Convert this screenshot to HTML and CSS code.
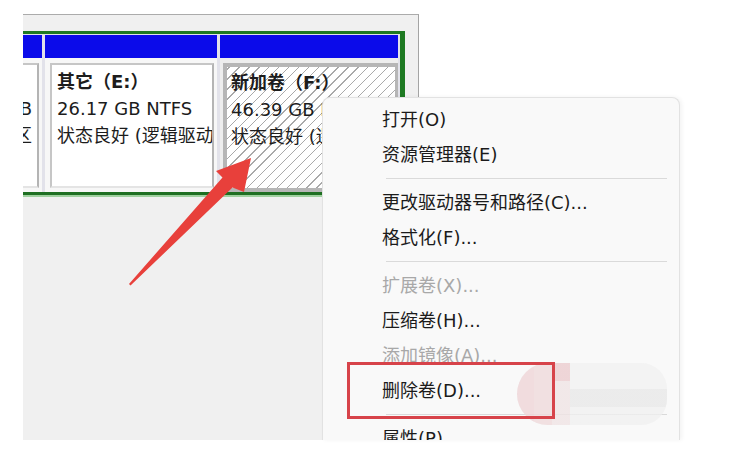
FILE: index.html
```html
<!DOCTYPE html>
<html lang="zh-CN">
<head>
<meta charset="utf-8">
<title>磁盘管理</title>
<link rel="stylesheet" href="styles.css">
</head>
<body>
<div class="page">
  <div class="panel">
    <div class="disk">
      <div class="part part-first">
        <div class="hdr"></div>
        <div class="body">
          <div class="box box-plain box-right">
            <div class="ln ttl">&nbsp;</div>
            <div class="ln">97.66 GB</div>
            <div class="ln">状态良好 (主分区</div>
          </div>
        </div>
      </div>
      <div class="part part-mid">
        <div class="hdr"></div>
        <div class="body">
          <div class="box box-plain">
            <div class="ln ttl">其它（E:）</div>
            <div class="ln">26.17 GB NTFS</div>
            <div class="ln">状态良好 (逻辑驱动器)</div>
          </div>
        </div>
      </div>
      <div class="part part-sel">
        <div class="hdr"></div>
        <div class="body body-sel">
          <div class="box box-hatch">
            <div class="ln ttl">新加卷（F:）</div>
            <div class="ln">46.39 GB NTFS</div>
            <div class="ln">状态良好 (逻辑驱动器)</div>
          </div>
        </div>
      </div>
    </div>
  </div>

  <div class="menu">
    <div class="item">打开(O)</div>
    <div class="item">资源管理器(E)</div>
    <div class="sep"></div>
    <div class="item">更改驱动器号和路径(C)...</div>
    <div class="item">格式化(F)...</div>
    <div class="sep"></div>
    <div class="item off">扩展卷(X)...</div>
    <div class="item">压缩卷(H)...</div>
    <div class="item off">添加镜像(A)...</div>
    <div class="item">删除卷(D)...</div>
    <div class="sep"></div>
    <div class="item">属性(P)</div>
  </div>

  <div class="mark">
    <div class="mk mk-a"></div>
    <div class="mk mk-b"></div>
    <div class="mk mk-c"></div>
    <div class="mk mk-d"></div>
  </div>
  <div class="callout"></div>

  <svg class="arrow" width="744" height="463" viewBox="0 0 744 463">
    <polygon points="251,158 244,192 232.5,187.5 130.5,285.5 129,284 222.5,177.5 216,171" fill="#e8403b"/>
  </svg>
</div>
</body>
</html>
```

FILE: styles.css
```css
html, body {
  margin: 0;
  padding: 0;
  background: #ffffff;
}

.page {
  position: relative;
  width: 744px;
  height: 463px;
  overflow: hidden;
  background: #ffffff;
  font-family: "DejaVu Sans", "Noto Sans CJK SC", sans-serif;
  font-size: 18px;
  color: #1c1c1c;
}

.panel {
  margin: 14px 0 0 23px;
  width: 396px;
  height: 426px;
  box-sizing: border-box;
  background: #f0f0f0;
  border-top: 1px solid #ababab;
  border-right: 1px solid #a4a4a4;
  padding-top: 16px;
}

.disk {
  display: flex;
  gap: 3px;
  width: 382px;
  height: 164px;
  box-sizing: border-box;
  overflow: hidden;
  padding: 1px 2px 0 0;
  background: #e2e2ea;
  border-top: 3px solid #1e7a22;
  border-right: 5px solid #1e7a22;
  border-bottom: 3px solid #1e6f22;
  box-shadow: 0 2px 0 #9fd09f;
}

.part {
  display: flex;
  flex-direction: column;
  flex: none;
}

.part-first {
  width: 170px;
  margin-left: -151px;
}

.part-mid {
  width: 172px;
}

.part-sel {
  width: 178px;
}

.hdr {
  height: 23px;
  background: #0b0bea;
  flex: none;
}

.body {
  flex: 1;
  display: flex;
  padding: 5px 3px 4px 5px;
  background: #f7f7f7;
  min-height: 0;
}

.body-sel {
  padding: 5px 0 0 3px;
  background: #eeeeee;
}

.box {
  flex: 1;
  min-width: 0;
  overflow: hidden;
  white-space: nowrap;
  box-sizing: border-box;
}

.box-plain {
  background: #ffffff;
  border: 2px solid #c6c6c6;
  border-right-color: #b4b4b4;
  border-bottom-color: #e4e4e4;
  padding: 3px 0 0 5px;
}

.box-right {
  text-align: right;
  padding: 3px 5px 0 0;
}

.box-hatch {
  border: 4px solid #b6b6b6;
  border-right-width: 3px;
  padding: 2px 0 0 4px;
  background-color: #ffffff;
  background-image: repeating-linear-gradient(
    -45deg,
    #ffffff 0px,
    #ffffff 6px,
    #a9a9a9 6px,
    #a9a9a9 7px
  );
}

.ln {
  height: 27px;
  line-height: 27px;
}

.ttl {
  font-weight: 700;
}

.menu {
  position: absolute;
  left: 322px;
  top: 97px;
  width: 358px;
  height: 343px;
  box-sizing: border-box;
  overflow: hidden;
  padding-top: 4px;
  background: #f9f9f9;
  border: 1px solid #e2e2e2;
  border-bottom: none;
  border-radius: 8px 8px 0 0;
  box-shadow: 2px 0 4px rgba(0, 0, 0, 0.05);
}

.item {
  height: 35px;
  line-height: 35px;
  padding-left: 59px;
  white-space: nowrap;
  color: #1b1b1b;
}

.item.off {
  color: #a8a8a8;
}

.sep {
  height: 13px;
  display: flex;
  align-items: center;
  padding: 0 12px 0 63px;
}

.sep::after {
  content: "";
  flex: 1;
  height: 1px;
  background: #dadada;
}

.mark {
  position: absolute;
  left: 517px;
  top: 363px;
  width: 150px;
  height: 62px;
  border-radius: 31px 26px 26px 31px;
  overflow: hidden;
  display: grid;
  grid-template-columns: 17px 18px 18px 97px;
  background: rgba(240, 240, 240, 0.5);
}

.mk-a {
  background: rgba(238, 204, 206, 0.6);
}

.mk-b {
  background: rgba(238, 210, 212, 0.6);
}

.mk-c {
  background: linear-gradient(
    to bottom,
    rgba(236, 200, 203, 0.7) 0 18px,
    rgba(240, 224, 225, 0.6) 18px 100%
  );
}

.mk-d {
  background: linear-gradient(
    to bottom,
    rgba(242, 242, 242, 0.5) 0 26px,
    rgba(232, 232, 232, 0.7) 26px 44px,
    rgba(240, 240, 240, 0.5) 44px 100%
  );
}

.callout {
  position: absolute;
  left: 347px;
  top: 362px;
  width: 208px;
  height: 57px;
  box-sizing: border-box;
  border: 3px solid #d7434a;
}

.arrow {
  position: absolute;
  left: 0;
  top: 0;
  pointer-events: none;
}
```
